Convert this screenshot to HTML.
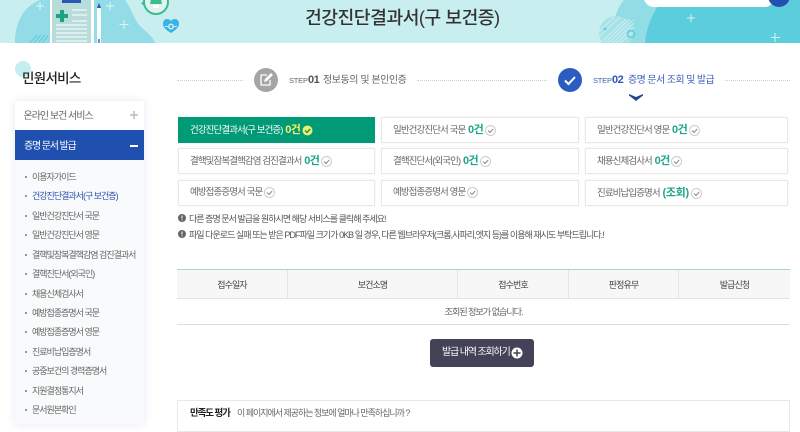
<!DOCTYPE html>
<html lang="ko">
<head>
<meta charset="utf-8">
<title>건강진단결과서</title>
<style>
html,body{margin:0;padding:0;background:#fff;}
body{width:800px;height:426px;overflow:hidden;position:relative;font-family:"Liberation Sans","Noto Sans CJK KR",sans-serif;color:#555;}
.a{position:absolute;white-space:nowrap;}
.card{position:absolute;box-sizing:border-box;width:198px;height:26px;background:#fff;border:1px solid #e8e8e8;box-shadow:0 0 2px rgba(0,0,0,.06);font-size:9.5px;line-height:24px;padding-left:11px;color:#666;white-space:nowrap;letter-spacing:-.9px;}
.card b{font-size:11px;color:#1ea688;font-weight:700;letter-spacing:-.6px;margin-left:1px;}
.card svg{vertical-align:-3px;margin-left:0;}
.m{position:absolute;left:25px;font-size:9px;color:#666;line-height:12px;white-space:nowrap;letter-spacing:-1px;}
.m:before{content:"";position:absolute;left:0;top:5px;width:2px;height:2px;background:#777;border-radius:50%;}
.m span{margin-left:7px;}
.th{position:absolute;top:270px;height:28px;line-height:30px;text-align:center;font-size:9px;letter-spacing:-.9px;color:#444;box-sizing:border-box;border-right:1px solid #e5e5e5;}
</style>
</head>
<body>
<!-- header -->
<svg class="a" style="left:0;top:0" width="800" height="43" viewBox="0 0 800 43">
<rect width="800" height="43" fill="#c9eef0"/>
<path d="M15 43C15 20 25 6 40 0H125C130 6 132 14 137 22C142 30 152 34 155 43Z" fill="#93dbe6"/>
<path d="M30 43L37 35M34 43L41 35M38 43L45 35M42 43L48 36" stroke="#5ccddc" stroke-width="1"/>
<path d="M40 2v8M36 6h8M110 2v8M106 6h8M124 20v9M119.500 24.500h9" stroke="#dff6f7" stroke-width="1"/>
<rect x="50" y="0" width="44" height="43" fill="#fff"/>
<rect x="52" y="0" width="39" height="43" fill="#b8dcda"/>
<rect x="62" y="0" width="19" height="3" fill="#2d55b5"/>
<path d="M62 10v12M56 16h12" stroke="#1ca37c" stroke-width="4"/>
<path d="M72 10h15M72 15h15M72 21h15M56 25h31M56 29h31M56 33h31M56 37h31M56 41h31" stroke="#f0fafa" stroke-width="1.300"/>
<rect x="97" y="8" width="4" height="35" fill="#fff"/>
<path d="M97 8L99 3L101 8Z" fill="#2d55b5"/>
<rect x="98" y="39" width="2" height="4" fill="#6d8fd0"/>
<circle cx="156" cy="2" r="12" fill="#dff4ee" stroke="#3fbb92" stroke-width="2"/>
<path d="M150 4h12l-1 -5h-10Z" fill="#3fbb92"/><path d="M153 5h6v3h-6Z" fill="#fff"/>
<path d="M144 1l-3 2 3 3Z" fill="#3fbb92"/>
<path d="M171 33C166 30 163 27 163 24C163 18 169 18 171 21C173 18 179 18 179 24C179 27 176 30 171 33Z" fill="#38b4e6"/>
<path d="M165 26.500h12" stroke="#c9eef0" stroke-width="1"/>
<circle cx="171" cy="26.500" r="3" fill="#c9eef0"/><circle cx="171" cy="26.500" r="1.500" fill="#38b4e6"/>
<path d="M614 43C612 25 615 10 624 0H800V43Z" fill="#92dce5"/>
<circle cx="616" cy="33" r="17" fill="#a8e2e9"/>
<path d="M600 43L626 19M604 43L630 19M608 43L633 20M612 43L634 23M616 43L634 27M620 43L634 31M598 38L620 17M598 33L614 17" stroke="#c9eef0" stroke-width="1"/>
<circle cx="631" cy="34" r="3.500" fill="none" stroke="#5ccddc" stroke-width="1.500"/>
<circle cx="605" cy="29" r="1.500" fill="#5ccddc"/>
<path d="M645 43C646 28 652 14 662 0H800V43Z" fill="#5ccddc"/>
<path d="M691 14v8M687 18h8M775 33v9M771 37.500h9" stroke="#d7f4f6" stroke-width="1"/>
<path d="M644 0h131c-4 5 -6 7 -10 7H654c-5 0 -8 -3 -10 -7Z" fill="#fff"/>
<circle cx="779" cy="-4" r="11" fill="#2350b0"/>
</svg>
<div class="a" style="left:305px;top:4px;width:194px;font-size:18.300px;line-height:28px;color:#333;letter-spacing:-.55px;font-weight:500;text-align:center;">건강진단결과서(구 보건증)</div>

<!-- sidebar -->
<div class="a" style="left:15px;top:61px;width:16px;height:16px;border-radius:50%;background:#c4eef0;"></div>
<div class="a" style="left:22px;top:69px;font-size:13.500px;line-height:20px;color:#222;font-weight:500;letter-spacing:-.7px;">민원서비스</div>
<div class="a" style="left:15px;top:101px;width:129px;height:323px;background:#f9fafb;box-shadow:0 0 8px rgba(90,110,170,.15);"></div>
<div class="a" style="left:15px;top:101px;width:129px;height:29px;background:#fff;"></div>
<div class="a" style="left:23.500px;top:110px;font-size:10px;line-height:13px;color:#666;letter-spacing:-1px;">온라인 보건 서비스</div>
<svg class="a" style="left:130px;top:111px" width="8" height="8"><path d="M4 0v8M0 4h8" stroke="#bbb" stroke-width="1.500"/></svg>
<div class="a" style="left:15px;top:130px;width:129px;height:30px;background:#1f50b0;"></div>
<div class="a" style="left:24px;top:140px;font-size:10px;line-height:13px;color:#fff;letter-spacing:-1.15px;">증명 문서 발급</div>
<div class="a" style="left:130px;top:145px;width:8px;height:2px;background:#fff;"></div>
<div class="m" style="top:171px"><span>이용자가이드</span></div>
<div class="m" style="top:190px;color:#2f55b0"><span>건강진단결과서(구 보건증)</span></div>
<div class="m" style="top:210px"><span>일반건강진단서 국문</span></div>
<div class="m" style="top:229px"><span>일반건강진단서 영문</span></div>
<div class="m" style="top:249px"><span>결핵및잠복결핵감염 검진결과서</span></div>
<div class="m" style="top:268px"><span>결핵진단서(외국인)</span></div>
<div class="m" style="top:288px"><span>채용신체검사서</span></div>
<div class="m" style="top:307px"><span>예방접종증명서 국문</span></div>
<div class="m" style="top:326px"><span>예방접종증명서 영문</span></div>
<div class="m" style="top:346px"><span>진료비납입증명서</span></div>
<div class="m" style="top:365px"><span>공중보건의 경력증명서</span></div>
<div class="m" style="top:385px"><span>지원결정통지서</span></div>
<div class="m" style="top:404px"><span>문서원본확인</span></div>

<!-- steps -->
<div class="a" style="left:177px;top:80px;width:66px;border-top:1px dotted #ccc;"></div>
<div class="a" style="left:417px;top:80px;width:130px;border-top:1px dotted #ccc;"></div>
<div class="a" style="left:725px;top:80px;width:65px;border-top:1px dotted #ccc;"></div>
<svg class="a" style="left:254px;top:68px" width="24" height="24" viewBox="0 0 24 24">
<circle cx="12" cy="12" r="12" fill="#a5a5a5"/>
<path d="M13 7H7v10h9v-5" fill="none" stroke="#fff" stroke-width="1.300"/>
<path d="M10 14l1-3 6-6 2 2-6 6Z" fill="#fff"/>
</svg>
<div class="a" style="left:289px;top:74px;font-size:7.500px;line-height:14px;color:#666;letter-spacing:-.2px;">STEP</div>
<div class="a" style="left:308px;top:73px;font-size:11px;line-height:14px;color:#555;letter-spacing:-.5px;font-weight:700;">01</div>
<div class="a" style="left:323px;top:74px;font-size:10px;line-height:14px;color:#666;letter-spacing:-.45px;">정보동의 및 본인인증</div>
<svg class="a" style="left:558px;top:68px" width="24" height="24" viewBox="0 0 24 24">
<circle cx="12" cy="12" r="12" fill="#2d5cc0"/>
<path d="M7 12.500l3.500 3.500 6.500-7" fill="none" stroke="#fff" stroke-width="2"/>
</svg>
<div class="a" style="left:593px;top:74px;font-size:7.500px;line-height:14px;color:#3f60bb;letter-spacing:-.2px;">STEP</div>
<div class="a" style="left:612px;top:73px;font-size:11px;line-height:14px;color:#2d55b5;letter-spacing:-.5px;font-weight:700;">02</div>
<div class="a" style="left:628px;top:74px;font-size:10px;line-height:14px;color:#3f60bb;letter-spacing:-.6px;">증명 문서 조회 및 발급</div>
<svg class="a" style="left:629px;top:94px" width="14" height="7"><path d="M0 0l7 3 7-3v1.500L7 7 0 1.500Z" fill="#24488f"/></svg>

<!-- cards -->
<div class="card" style="left:178px;top:117px;width:197px;background:#009a76;border-color:#009a76;color:#fff;">건강진단결과서(구 보건증) <b style="color:#f2ee6a">0건</b> <svg width="11" height="11" viewBox="0 0 11 11"><circle cx="5.500" cy="5.500" r="5" fill="#f2ee6a"/><path d="M3 5.500l2 2 3.200-3.500" fill="none" stroke="#009a76" stroke-width="1.400"/></svg></div>
<div class="card" style="left:381px;top:117px;">일반건강진단서 국문 <b>0건</b> <svg width="11" height="11" viewBox="0 0 11 11"><circle cx="5.500" cy="5.500" r="5" fill="none" stroke="#ccc"/><path d="M3 5.500l2 2 3.200-3.500" fill="none" stroke="#888" stroke-width="1"/></svg></div>
<div class="card" style="left:585px;top:117px;width:203px;">일반건강진단서 영문 <b>0건</b> <svg width="11" height="11" viewBox="0 0 11 11"><circle cx="5.500" cy="5.500" r="5" fill="none" stroke="#ccc"/><path d="M3 5.500l2 2 3.200-3.500" fill="none" stroke="#888" stroke-width="1"/></svg></div>
<div class="card" style="left:178px;top:148px;width:197px;">결핵및잠복결핵감염 검진결과서 <b>0건</b> <svg width="11" height="11" viewBox="0 0 11 11"><circle cx="5.500" cy="5.500" r="5" fill="none" stroke="#ccc"/><path d="M3 5.500l2 2 3.200-3.500" fill="none" stroke="#888" stroke-width="1"/></svg></div>
<div class="card" style="left:381px;top:148px;">결핵진단서(외국인) <b>0건</b> <svg width="11" height="11" viewBox="0 0 11 11"><circle cx="5.500" cy="5.500" r="5" fill="none" stroke="#ccc"/><path d="M3 5.500l2 2 3.200-3.500" fill="none" stroke="#888" stroke-width="1"/></svg></div>
<div class="card" style="left:585px;top:148px;width:203px;">채용신체검사서 <b>0건</b> <svg width="11" height="11" viewBox="0 0 11 11"><circle cx="5.500" cy="5.500" r="5" fill="none" stroke="#ccc"/><path d="M3 5.500l2 2 3.200-3.500" fill="none" stroke="#888" stroke-width="1"/></svg></div>
<div class="card" style="left:178px;top:180px;width:197px;">예방접종증명서 국문 <svg width="11" height="11" viewBox="0 0 11 11"><circle cx="5.500" cy="5.500" r="5" fill="none" stroke="#ccc"/><path d="M3 5.500l2 2 3.200-3.500" fill="none" stroke="#888" stroke-width="1"/></svg></div>
<div class="card" style="left:381px;top:180px;">예방접종증명서 영문 <svg width="11" height="11" viewBox="0 0 11 11"><circle cx="5.500" cy="5.500" r="5" fill="none" stroke="#ccc"/><path d="M3 5.500l2 2 3.200-3.500" fill="none" stroke="#888" stroke-width="1"/></svg></div>
<div class="card" style="left:585px;top:180px;width:203px;">진료비납입증명서 <b style="letter-spacing:-.3px">(조회)</b> <svg width="11" height="11" viewBox="0 0 11 11"><circle cx="5.500" cy="5.500" r="5" fill="none" stroke="#ccc"/><path d="M3 5.500l2 2 3.200-3.500" fill="none" stroke="#888" stroke-width="1"/></svg></div>

<!-- notes -->
<svg class="a" style="left:178px;top:214px" width="8" height="8" viewBox="0 0 8 8"><circle cx="4" cy="4" r="4" fill="#666"/><path d="M4 1.500v3M4 5.500v1" stroke="#fff"/></svg>
<div class="a" style="left:189px;top:213px;font-size:9px;line-height:12px;color:#555;letter-spacing:-.97px;">다른 증명 문서 발급을 원하시면 해당 서비스를 클릭해 주세요!</div>
<svg class="a" style="left:178px;top:230px" width="8" height="8" viewBox="0 0 8 8"><circle cx="4" cy="4" r="4" fill="#666"/><path d="M4 1.500v3M4 5.500v1" stroke="#fff"/></svg>
<div class="a" style="left:189px;top:229px;font-size:9px;line-height:12px;color:#555;letter-spacing:-.97px;">파일 다운로드 실패 또는 받은 PDF파일 크기가 0KB 일 경우, 다른 웹브라우저(크롬,사파리,엣지 등)를 이용해 재시도 부탁드립니다.!</div>

<!-- table -->
<div class="a" style="left:177px;top:269px;width:613px;height:1px;background:#9fdacb;"></div>
<div class="a" style="left:177px;top:270px;width:613px;height:28px;background:#f7f7f7;border-bottom:1px solid #e2e2e2;"></div>
<div class="th" style="left:177px;width:111px;">접수일자</div>
<div class="th" style="left:288px;width:170px;">보건소명</div>
<div class="th" style="left:458px;width:111px;">접수번호</div>
<div class="th" style="left:569px;width:110px;">판정유무</div>
<div class="th" style="left:679px;width:111px;border-right:0;">발급신청</div>
<div class="a" style="left:177px;top:299px;width:613px;height:25px;line-height:26px;text-align:center;font-size:9.200px;color:#666;letter-spacing:-1.1px;border-bottom:1px solid #ddd;">조회된 정보가 없습니다.</div>

<!-- button -->
<div class="a" style="left:430px;top:339px;width:104px;height:28px;background:#444257;border-radius:3px;"></div>
<div class="a" style="left:442px;top:346px;font-size:10px;line-height:14px;color:#fff;letter-spacing:-1.15px;">발급 내역 조회하기</div>
<svg class="a" style="left:511px;top:347px" width="12" height="12" viewBox="0 0 12 12"><circle cx="6" cy="6" r="5.500" fill="#fff"/><path d="M6 2.500v7M2.500 6h7" stroke="#444257" stroke-width="1.500"/></svg>

<!-- rating -->
<div class="a" style="left:177px;top:400px;width:611px;height:30px;border:1px solid #e8e8e8;"></div>
<div class="a" style="left:190px;top:407px;font-size:9.500px;line-height:13px;color:#222;font-weight:700;letter-spacing:-1.1px;">만족도 평가</div>
<div class="a" style="left:237px;top:407px;font-size:9px;line-height:13px;color:#666;letter-spacing:-1.03px;">이 페이지에서 제공하는 정보에 얼마나 만족하십니까 ?</div>
</body>
</html>
